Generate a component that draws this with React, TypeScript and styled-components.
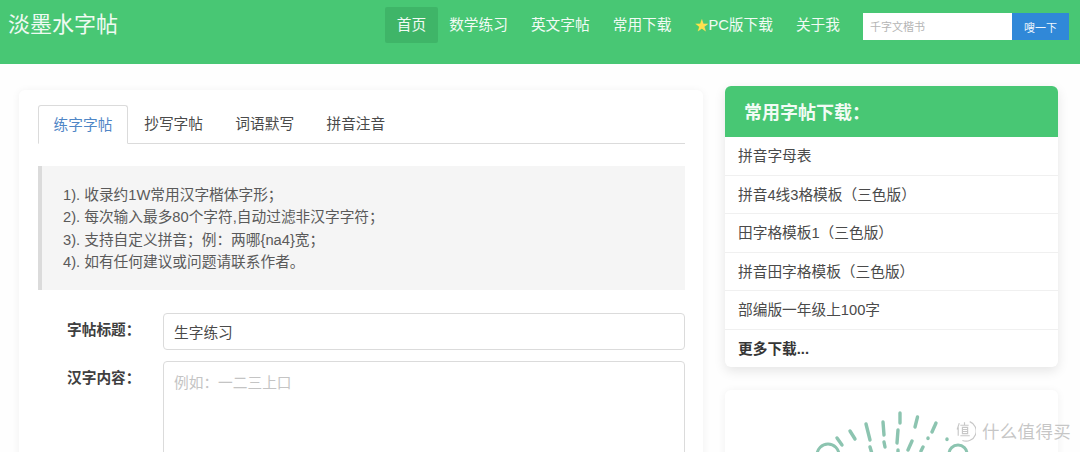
import React from 'react';
import styled, { createGlobalStyle } from 'styled-components';

const GlobalStyle = createGlobalStyle`
  html, body {
    margin: 0;
    padding: 0;
    height: 452px;
    overflow: hidden;
    background: #fefefe;
    font-family: "Liberation Sans", "Noto Sans CJK SC", sans-serif;
    color: #4a4a4a;
  }
  * { box-sizing: border-box; }
`;

const Page = styled.div`
  width: 1080px;
  height: 452px;
  position: relative;
  overflow: hidden;
`;

const Navbar = styled.header`
  height: 64px;
  background: #48c774;
  display: flex;
  align-items: flex-start;
  padding: 7px 11px 0 8px;
`;

const Brand = styled.div`
  font-size: 22px;
  line-height: 36px;
  color: #eefaf2;
  margin-right: auto;
`;

const NavLink = styled.a<{ $active?: boolean }>`
  height: 36px;
  line-height: 36px;
  padding: 0 11.5px;
  font-size: 14.7px;
  color: #f1fbf4;
  white-space: nowrap;
  border-radius: 2px;
  background: ${(p) => (p.$active ? '#3fb568' : 'transparent')};
`;

const Star = styled.span`
  color: #ffe14d;
  font-size: 14px;
`;

const SearchForm = styled.form`
  display: flex;
  margin: 6px 0 0 11.5px;
`;

const SearchInput = styled.input`
  width: 149px;
  height: 27px;
  border: none;
  padding: 0 7px;
  font-size: 11px;
  font-family: inherit;
  background: #fff;
  outline: none;
  &::placeholder { color: #b5b5b5; }
`;

const SearchButton = styled.button`
  width: 57px;
  height: 27px;
  border: none;
  background: #3088d8;
  color: #eef6fd;
  font-size: 11px;
  font-family: inherit;
  padding: 0;
`;

const Content = styled.div`
  display: flex;
  align-items: flex-start;
  gap: 22px;
  padding: 22px 22px 0 19px;
`;

const MainCard = styled.main`
  width: 684px;
  height: 400px;
  margin-top: 4px;
  padding: 15px 18px 0 19px;
  background: #fff;
  border-radius: 6px;
  box-shadow: 0 1px 8px rgba(10, 10, 10, 0.06);
`;

const Tabs = styled.nav`
  display: flex;
  height: 39px;
  border-bottom: 1px solid #dbdbdb;
`;

const Tab = styled.a<{ $active?: boolean }>`
  height: 39px;
  width: ${(p) => (p.$active ? '90px' : 'auto')};
  padding: ${(p) => (p.$active ? '0' : '0 16.2px')};
  text-align: center;
  line-height: 39px;
  font-size: 14.7px;
  color: ${(p) => (p.$active ? '#4f86c6' : '#4a4a4a')};
  background: ${(p) => (p.$active ? '#fff' : 'transparent')};
  border: ${(p) => (p.$active ? '1px solid #dbdbdb' : 'none')};
  border-bottom-color: ${(p) => (p.$active ? '#fff' : 'transparent')};
  border-radius: 3px 3px 0 0;
`;

const Notice = styled.blockquote`
  margin: 22px 0 23px;
  height: 124px;
  padding: 18px 21px;
  background: #f5f5f5;
  border-left: 4px solid #dbdbdb;
  font-size: 14.7px;
  line-height: 22.4px;
  color: #5a5a5a;
`;

const Field = styled.div`
  display: flex;
  align-items: flex-start;
  margin-bottom: 11px;
`;

const Label = styled.label`
  width: 125px;
  padding: 6px 0 0 29px;
  font-size: 14.7px;
  font-weight: 700;
  color: #3f3f3f;
  line-height: 22px;
  white-space: nowrap;
`;

const TextInput = styled.input`
  flex: 1;
  height: 37px;
  padding: 0 10px;
  border: 1px solid #dbdbdb;
  border-radius: 4px;
  font-size: 14.7px;
  font-family: inherit;
  color: #4a4a4a;
  background: #fff;
  outline: none;
`;

const TextArea = styled.textarea`
  flex: 1;
  height: 130px;
  padding: 9px 10px;
  border: 1px solid #dbdbdb;
  border-radius: 4px;
  font-size: 14.7px;
  font-family: inherit;
  resize: none;
  outline: none;
  &::placeholder { color: #c4c4c4; }
`;

const Sidebar = styled.aside`
  width: 333px;
  display: flex;
  flex-direction: column;
  gap: 23px;
`;

const DownloadCard = styled.section`
  background: #fff;
  border-radius: 6px;
  overflow: hidden;
  box-shadow: 0 4px 12px rgba(10, 10, 10, 0.1);
`;

const DownloadTitle = styled.h3`
  margin: 0;
  height: 51px;
  padding: 0 19px;
  line-height: 54px;
  background: #48c774;
  color: #f2fbf5;
  font-size: 18px;
  font-weight: 700;
`;

const DownloadRow = styled.a<{ $bold?: boolean }>`
  display: block;
  height: ${(p) => (p.$bold ? '37px' : '38.6px')};
  line-height: 38.6px;
  padding: 0 13px;
  font-size: 14.7px;
  font-weight: ${(p) => (p.$bold ? 700 : 400)};
  color: ${(p) => (p.$bold ? '#363636' : '#4a4a4a')};
  border-bottom: ${(p) => (p.$bold ? 'none' : '1px solid #f0f0f0')};
`;

const QrCard = styled.section`
  height: 120px;
  background: #fff;
  border-radius: 6px;
  box-shadow: 0 1px 8px rgba(10, 10, 10, 0.06);
  padding: 10px 0 0 65px;
`;

const Watermark = styled.div`
  position: absolute;
  right: 9px;
  bottom: 9px;
  display: flex;
  align-items: center;
  gap: 6px;
  font-size: 17.5px;
  letter-spacing: 0.3px;
  color: rgba(180, 180, 180, 0.75);
`;

const rays = [
  [900, 413, 900, 423], [917.5, 417, 915, 427], [936, 423, 932, 432], [883, 422, 884, 435],
  [866, 424, 870, 440], [850, 431, 855, 439], [837, 438, 842, 445], [898, 430, 897, 443],
  [884, 442, 885, 447], [870, 447, 871.5, 452], [912, 441, 908, 450], [923, 447, 921, 451],
  [898, 450, 898, 456], [928, 438, 928, 438.5], [947, 439, 947, 439.5],
];

const Burst = () => (
  <svg width="200" height="60" viewBox="790 400 200 60" fill="none">
    <circle cx="828" cy="455" r="11" stroke="#8cc4b0" strokeWidth="3" />
    <circle cx="958" cy="454" r="9" stroke="#8cc4b0" strokeWidth="3" />
    {rays.map(([x1, y1, x2, y2], i) => (
      <line key={i} x1={x1} y1={y1} x2={x2} y2={y2} stroke="#8cc4b0" strokeWidth="3.4" strokeLinecap="round" />
    ))}
  </svg>
);

const nav = ['数学练习', '英文字帖', '常用下载'];
const downloads = ['拼音字母表', '拼音4线3格模板（三色版）', '田字格模板1（三色版）', '拼音田字格模板（三色版）', '部编版一年级上100字'];
const notes = ['1). 收录约1W常用汉字楷体字形；', '2). 每次输入最多80个字符,自动过滤非汉字字符；', '3). 支持自定义拼音；例：两哪{na4}宽；', '4). 如有任何建议或问题请联系作者。'];

export default function App() {
  return (
    <Page>
      <GlobalStyle />
      <Navbar>
        <Brand>淡墨水字帖</Brand>
        <NavLink $active>首页</NavLink>
        {nav.map((n) => <NavLink key={n}>{n}</NavLink>)}
        <NavLink><Star>★</Star>PC版下载</NavLink>
        <NavLink>关于我</NavLink>
        <SearchForm>
          <SearchInput placeholder="千字文楷书" />
          <SearchButton type="button">嗖一下</SearchButton>
        </SearchForm>
      </Navbar>
      <Content>
        <MainCard>
          <Tabs>
            <Tab $active>练字字帖</Tab>
            <Tab>抄写字帖</Tab>
            <Tab>词语默写</Tab>
            <Tab>拼音注音</Tab>
          </Tabs>
          <Notice>
            {notes.map((n) => <div key={n}>{n}</div>)}
          </Notice>
          <Field>
            <Label>字帖标题：</Label>
            <TextInput defaultValue="生字练习" />
          </Field>
          <Field>
            <Label>汉字内容：</Label>
            <TextArea placeholder="例如：一二三上口" />
          </Field>
        </MainCard>
        <Sidebar>
          <DownloadCard>
            <DownloadTitle>常用字帖下载：</DownloadTitle>
            {downloads.map((d) => <DownloadRow key={d}>{d}</DownloadRow>)}
            <DownloadRow $bold>更多下载...</DownloadRow>
          </DownloadCard>
          <QrCard><Burst /></QrCard>
        </Sidebar>
      </Content>
      <Watermark>
        <svg width="23" height="23" viewBox="0 0 22 22" fill="none" stroke="currentColor" strokeWidth="1.1">
          <path d="M16 2.5A9.5 9.5 0 0 1 9 20.5" />
          <path d="M6 4l-2 6M5 8v8M11 3v3M7 6h8M9 8h5v6H9zM9 10h5M9 12h5M7 16h9" />
        </svg>
        <span>什么值得买</span>
      </Watermark>
    </Page>
  );
}
